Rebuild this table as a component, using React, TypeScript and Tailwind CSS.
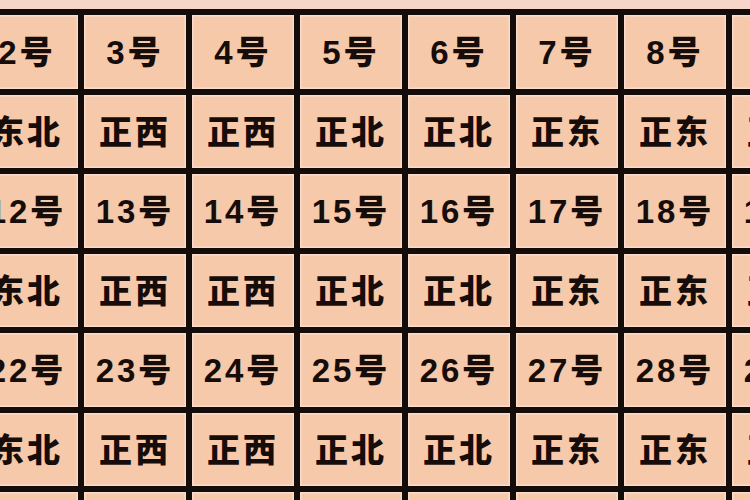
const days = [
  ['2号', '3号', '4号', '5号', '6号', '7号', '8号', '9号'],
  ['12号', '13号', '14号', '15号', '16号', '17号', '18号', '19号'],
  ['22号', '23号', '24号', '25号', '26号', '27号', '28号', '29号'],
];

const directions = ['东北', '正西', '正西', '正北', '正北', '正东', '正东', '正南'];

const Cell = ({ text }: { text?: string }) => (
  <div className="flex items-center justify-center bg-[#f5c9aa] shadow-[inset_0_0_0_1.5px_#f9dccd] pt-[2px] text-[33px] font-black tracking-[3px] text-[#160d0a] leading-none">
    {text}
  </div>
);

export default function App() {
  return (
    <div
      className="h-[500px] w-[750px] overflow-hidden bg-[#f6d6c8]"
      style={{ fontFamily: '"Liberation Sans", "Noto Sans CJK SC", sans-serif' }}
    >
      <div className="-ml-[30px] mt-[9px] grid w-max grid-cols-[repeat(8,102px)] auto-rows-[73.5px] gap-[6px] bg-[#140c08] p-[6px]">
        {days.map((row, i) => (
          <>
            {row.map((d) => (
              <Cell key={d} text={d} />
            ))}
            {directions.map((dir, j) => (
              <Cell key={`${i}-${j}`} text={dir} />
            ))}
          </>
        ))}
        {directions.map((_, j) => (
          <Cell key={`last-${j}`} />
        ))}
      </div>
    </div>
  );
}
